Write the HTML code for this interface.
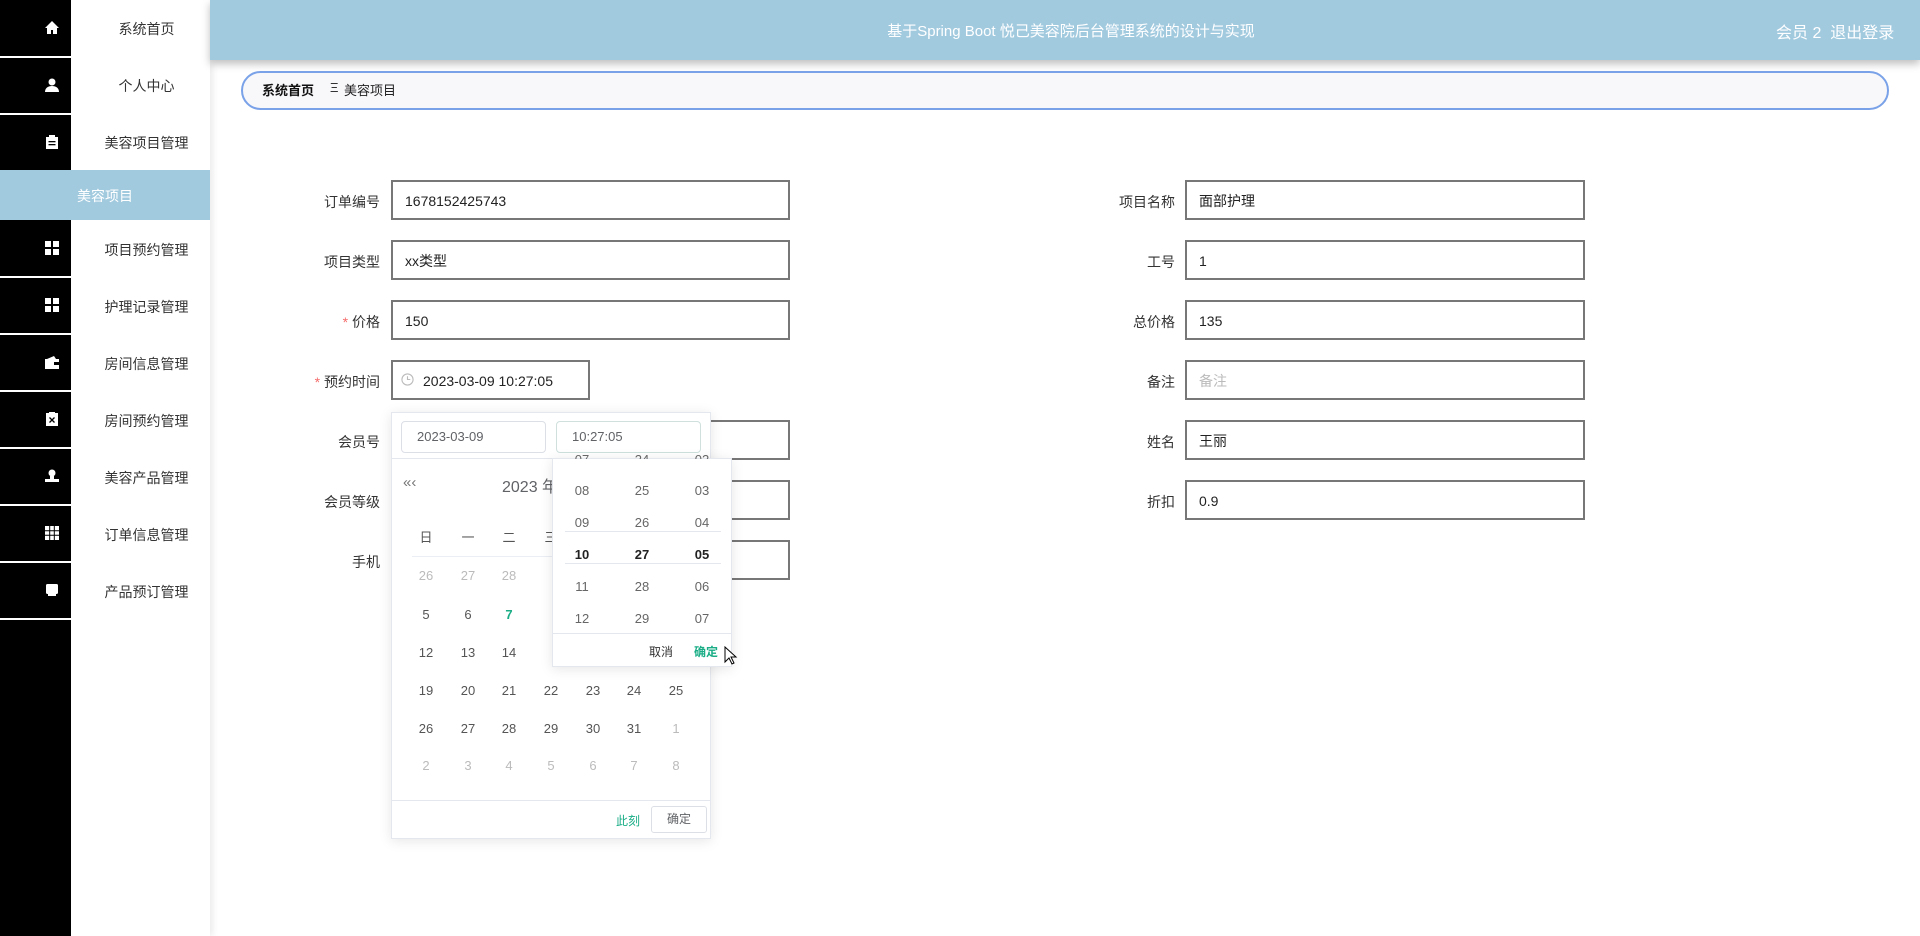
<!DOCTYPE html>
<html><head><meta charset="utf-8"><style>
*{box-sizing:border-box;margin:0;padding:0}
body{width:1920px;height:936px;overflow:hidden;background:#fff;font-family:"Liberation Sans","Noto Sans CJK SC",sans-serif;position:relative;color:#333}
.a{position:absolute}
#blk{left:0;top:0;width:71px;height:936px;background:#000}
#menu{left:71px;top:0;width:139px;height:936px;background:#fff;box-shadow:3px 0 6px rgba(0,0,0,.08)}
.sep{left:0;width:71px;height:2px;background:#fff}
.mi{left:77px;width:139px;text-align:center;font-size:14px;color:#333}
.ic{left:44px;width:16px;height:16px}
#hdr{left:210px;top:0;width:1710px;height:60px;background:#a2cadf;box-shadow:0 4px 8px rgba(0,0,0,.25)}
.lbl{font-size:14px;color:#333;text-align:right;width:140px}
.inp{border:2px solid #777;height:40px;background:#fff;font-size:14px;color:#222;padding-left:12px;line-height:38px}
.d{width:40px;text-align:center;font-size:13px;color:#555}
.g{color:#bbb}
.t{width:40px;text-align:center;font-size:13px;color:#666}
</style></head><body>
<div id="blk" class="a"></div>
<div id="menu" class="a"></div>
<div class="a sep" style="top:56px"></div>
<div class="a sep" style="top:113px"></div>
<div class="a" style="left:0;top:170px;width:210px;height:50px;background:#a2cadf"></div>
<div class="a sep" style="top:276px"></div>
<div class="a sep" style="top:333px"></div>
<div class="a sep" style="top:390px"></div>
<div class="a sep" style="top:447px"></div>
<div class="a sep" style="top:504px"></div>
<div class="a sep" style="top:561px"></div>
<div class="a sep" style="top:618px"></div>

<div class="a mi" style="top:19px">系统首页</div>
<div class="a mi" style="top:76px">个人中心</div>
<div class="a mi" style="top:133px">美容项目管理</div>
<div class="a" style="left:77px;top:186px;font-size:14px;color:#fff">美容项目</div>
<div class="a mi" style="top:240px">项目预约管理</div>
<div class="a mi" style="top:297px">护理记录管理</div>
<div class="a mi" style="top:354px">房间信息管理</div>
<div class="a mi" style="top:411px">房间预约管理</div>
<div class="a mi" style="top:468px">美容产品管理</div>
<div class="a mi" style="top:525px">订单信息管理</div>
<div class="a mi" style="top:582px">产品预订管理</div>

<svg class="a ic" style="top:20px" viewBox="0 0 16 16"><path d="M8 1L1 8h2v6h4v-4h2v4h4V8h2z" fill="#fff"/></svg>
<svg class="a ic" style="top:77px" viewBox="0 0 16 16"><circle cx="8" cy="5" r="3.5" fill="#fff"/><path d="M1 15c0-4 3-6 7-6s7 2 7 6z" fill="#fff"/></svg>
<svg class="a ic" style="top:134px" viewBox="0 0 16 16"><path d="M2 3h12v12H2z" fill="#fff"/><rect x="5" y="1" width="6" height="3" fill="#fff"/><rect x="4.5" y="7" width="7" height="1.3" fill="#000"/><rect x="4.5" y="10" width="7" height="1.3" fill="#000"/></svg>
<svg class="a ic" style="top:240px" viewBox="0 0 16 16"><rect x="1" y="1" width="6" height="6" fill="#fff"/><rect x="9" y="1" width="6" height="6" fill="#fff"/><rect x="1" y="9" width="6" height="6" fill="#fff"/><rect x="9" y="9" width="6" height="6" fill="#fff"/></svg>
<svg class="a ic" style="top:297px" viewBox="0 0 16 16"><rect x="1" y="1" width="6" height="6" fill="#fff"/><rect x="9" y="1" width="6" height="6" fill="#fff"/><rect x="1" y="9" width="6" height="6" fill="#fff"/><rect x="9" y="9" width="6" height="6" fill="#fff"/></svg>
<svg class="a ic" style="top:354px" viewBox="0 0 16 16"><path d="M1 5h14v10H1z" fill="#fff"/><path d="M3 5l7-3 2 3z" fill="#fff"/><rect x="10" y="8" width="5" height="3" fill="#000"/></svg>
<svg class="a ic" style="top:411px" viewBox="0 0 16 16"><path d="M2 2h12v13H2z" fill="#fff"/><rect x="5" y="1" width="6" height="2" fill="#fff"/><path d="M5.5 6.5l5 5M10.5 6.5l-5 5" stroke="#000" stroke-width="1.3"/></svg>
<svg class="a ic" style="top:468px" viewBox="0 0 16 16"><circle cx="8" cy="5" r="3.5" fill="#fff"/><rect x="6" y="8" width="4" height="3" fill="#fff"/><rect x="1" y="11" width="14" height="3" fill="#fff"/></svg>
<svg class="a ic" style="top:525px" viewBox="0 0 16 16"><rect x="1" y="1" width="14" height="14" fill="#fff"/><path d="M5.7 1v14M10.3 1v14M1 5.7h14M1 10.3h14" stroke="#000" stroke-width="1"/></svg>
<svg class="a ic" style="top:582px" viewBox="0 0 16 16"><rect x="2" y="2" width="12" height="10" rx="1.5" fill="#fff"/><rect x="4" y="12" width="8" height="2" fill="#fff"/></svg>

<div id="hdr" class="a"></div>
<div class="a" style="left:216px;top:20px;width:1710px;text-align:center;font-size:15px;color:#fff">基于Spring Boot 悦己美容院后台管理系统的设计与实现</div>
<div class="a" style="left:1776px;top:19px;font-size:16px;color:#fff">会员 2&nbsp;&nbsp;退出登录</div>

<div class="a" style="left:241px;top:71px;width:1648px;height:39px;border:2px solid #7aa2e8;border-radius:20px;background:#f8f7fa"></div>
<div class="a" style="left:262px;top:80px;font-size:13px;color:#111;font-weight:bold">系统首页</div>
<div class="a" style="left:330px;top:80px;font-size:13px;color:#333">Ξ</div>
<div class="a" style="left:344px;top:80px;font-size:13px;color:#222">美容项目</div>

<div class="a lbl" style="left:240px;top:192px">订单编号</div>
<div class="a inp" style="left:391px;top:180px;width:399px">1678152425743</div>
<div class="a lbl" style="left:240px;top:252px">项目类型</div>
<div class="a inp" style="left:391px;top:240px;width:399px">xx类型</div>
<div class="a lbl" style="left:240px;top:312px"><span style="color:#f56c6c">*</span> 价格</div>
<div class="a inp" style="left:391px;top:300px;width:399px">150</div>
<div class="a lbl" style="left:240px;top:372px"><span style="color:#f56c6c">*</span> 预约时间</div>
<div class="a inp" style="left:391px;top:360px;width:199px;padding-left:30px">2023-03-09 10:27:05</div>
<svg class="a" style="left:401px;top:373px" width="13" height="13" viewBox="0 0 14 14"><circle cx="7" cy="7" r="6" fill="none" stroke="#bbb" stroke-width="1.2"/><path d="M7 3.5V7h3" fill="none" stroke="#bbb" stroke-width="1.2"/></svg>
<div class="a lbl" style="left:240px;top:432px">会员号</div>
<div class="a inp" style="left:391px;top:420px;width:399px"></div>
<div class="a lbl" style="left:240px;top:492px">会员等级</div>
<div class="a inp" style="left:391px;top:480px;width:399px"></div>
<div class="a lbl" style="left:240px;top:552px">手机</div>
<div class="a inp" style="left:391px;top:540px;width:399px"></div>

<div class="a lbl" style="left:1035px;top:192px">项目名称</div>
<div class="a inp" style="left:1185px;top:180px;width:400px">面部护理</div>
<div class="a lbl" style="left:1035px;top:252px">工号</div>
<div class="a inp" style="left:1185px;top:240px;width:400px">1</div>
<div class="a lbl" style="left:1035px;top:312px">总价格</div>
<div class="a inp" style="left:1185px;top:300px;width:400px">135</div>
<div class="a lbl" style="left:1035px;top:372px">备注</div>
<div class="a inp" style="left:1185px;top:360px;width:400px;color:#bbb">备注</div>
<div class="a lbl" style="left:1035px;top:432px">姓名</div>
<div class="a inp" style="left:1185px;top:420px;width:400px">王丽</div>
<div class="a lbl" style="left:1035px;top:492px">折扣</div>
<div class="a inp" style="left:1185px;top:480px;width:400px">0.9</div>

<div class="a" style="left:391px;top:412px;width:320px;height:427px;background:#fff;border:1px solid #e4e7ed;box-shadow:0 2px 12px rgba(0,0,0,.1)"></div>
<div class="a" style="left:401px;top:421px;width:145px;height:32px;border:1px solid #dcdfe6;border-radius:4px;font-size:13px;color:#606266;padding-left:15px;line-height:30px">2023-03-09</div>
<div class="a" style="left:556px;top:421px;width:145px;height:32px;border:1px solid #cfe0dd;border-radius:4px;font-size:13px;color:#606266;padding-left:15px;line-height:30px">10:27:05</div>
<div class="a" style="left:392px;top:458px;width:318px;height:1px;background:#e4e7ed"></div>
<div class="a" style="left:403px;top:474px;font-size:15px;color:#777">«‹</div>
<div class="a" style="left:502px;top:473px;font-size:16px;color:#606266">2023 年</div>
<div class="a" style="left:412px;top:556px;width:290px;height:1px;background:#ebeef5"></div>
<div class="a d" style="left:406px;top:527px">日</div>
<div class="a d" style="left:448px;top:527px">一</div>
<div class="a d" style="left:489px;top:527px">二</div>
<div class="a d" style="left:531px;top:527px">三</div>

<div class="a d g" style="left:406px;top:568px">26</div>
<div class="a d g" style="left:448px;top:568px">27</div>
<div class="a d g" style="left:489px;top:568px">28</div>

<div class="a d" style="left:406px;top:607px">5</div>
<div class="a d" style="left:448px;top:607px">6</div>
<div class="a d" style="left:489px;top:607px;color:#1aad86;font-weight:bold">7</div>

<div class="a d" style="left:406px;top:645px">12</div>
<div class="a d" style="left:448px;top:645px">13</div>
<div class="a d" style="left:489px;top:645px">14</div>

<div class="a d" style="left:406px;top:683px">19</div><div class="a d" style="left:448px;top:683px">20</div><div class="a d" style="left:489px;top:683px">21</div><div class="a d" style="left:531px;top:683px">22</div><div class="a d" style="left:573px;top:683px">23</div><div class="a d" style="left:614px;top:683px">24</div><div class="a d" style="left:656px;top:683px">25</div>
<div class="a d" style="left:406px;top:721px">26</div><div class="a d" style="left:448px;top:721px">27</div><div class="a d" style="left:489px;top:721px">28</div><div class="a d" style="left:531px;top:721px">29</div><div class="a d" style="left:573px;top:721px">30</div><div class="a d" style="left:614px;top:721px">31</div><div class="a d g" style="left:656px;top:721px">1</div>
<div class="a d g" style="left:406px;top:758px">2</div><div class="a d g" style="left:448px;top:758px">3</div><div class="a d g" style="left:489px;top:758px">4</div><div class="a d g" style="left:531px;top:758px">5</div><div class="a d g" style="left:573px;top:758px">6</div><div class="a d g" style="left:614px;top:758px">7</div><div class="a d g" style="left:656px;top:758px">8</div>

<div class="a" style="left:392px;top:800px;width:318px;height:1px;background:#e4e7ed"></div>
<div class="a" style="left:616px;top:812px;font-size:12px;color:#1aad86">此刻</div>
<div class="a" style="left:651px;top:806px;width:56px;height:27px;border:1px solid #dcdfe6;border-radius:3px;font-size:12px;color:#606266;text-align:center;line-height:25px">确定</div>

<div class="a" style="left:552px;top:458px;width:180px;height:209px;background:#fff;border:1px solid #e4e7ed;box-shadow:0 2px 12px rgba(0,0,0,.1);overflow:hidden">
 <div class="a" style="left:12px;top:72px;width:156px;height:1px;background:#e4e7ed"></div>
 <div class="a" style="left:12px;top:104px;width:156px;height:1px;background:#e4e7ed"></div>
 <div class="a" style="left:0;top:174px;width:180px;height:1px;background:#e4e7ed"></div>
</div>
<div class="a t" style="left:562px;top:452px">07</div><div class="a t" style="left:622px;top:452px">24</div><div class="a t" style="left:682px;top:452px">02</div>
<div class="a t" style="left:562px;top:483px">08</div><div class="a t" style="left:622px;top:483px">25</div><div class="a t" style="left:682px;top:483px">03</div>
<div class="a t" style="left:562px;top:515px">09</div><div class="a t" style="left:622px;top:515px">26</div><div class="a t" style="left:682px;top:515px">04</div>
<div class="a t" style="left:562px;top:547px;color:#222;font-weight:bold">10</div><div class="a t" style="left:622px;top:547px;color:#222;font-weight:bold">27</div><div class="a t" style="left:682px;top:547px;color:#222;font-weight:bold">05</div>
<div class="a t" style="left:562px;top:579px">11</div><div class="a t" style="left:622px;top:579px">28</div><div class="a t" style="left:682px;top:579px">06</div>
<div class="a t" style="left:562px;top:611px">12</div><div class="a t" style="left:622px;top:611px">29</div><div class="a t" style="left:682px;top:611px">07</div>
<div class="a" style="left:553px;top:459px;width:178px;height:8px;background:#fff"></div>
<div class="a" style="left:649px;top:643px;font-size:12px;color:#333">取消</div>
<div class="a" style="left:694px;top:643px;font-size:12px;color:#1aad86;font-weight:bold">确定</div>
<svg class="a" style="left:724px;top:646px" width="14" height="20" viewBox="0 0 14 20"><path d="M1 1v15l4-4 3 6 2-1-3-6h5z" fill="#fff" stroke="#000" stroke-width="1"/></svg>
</body></html>
